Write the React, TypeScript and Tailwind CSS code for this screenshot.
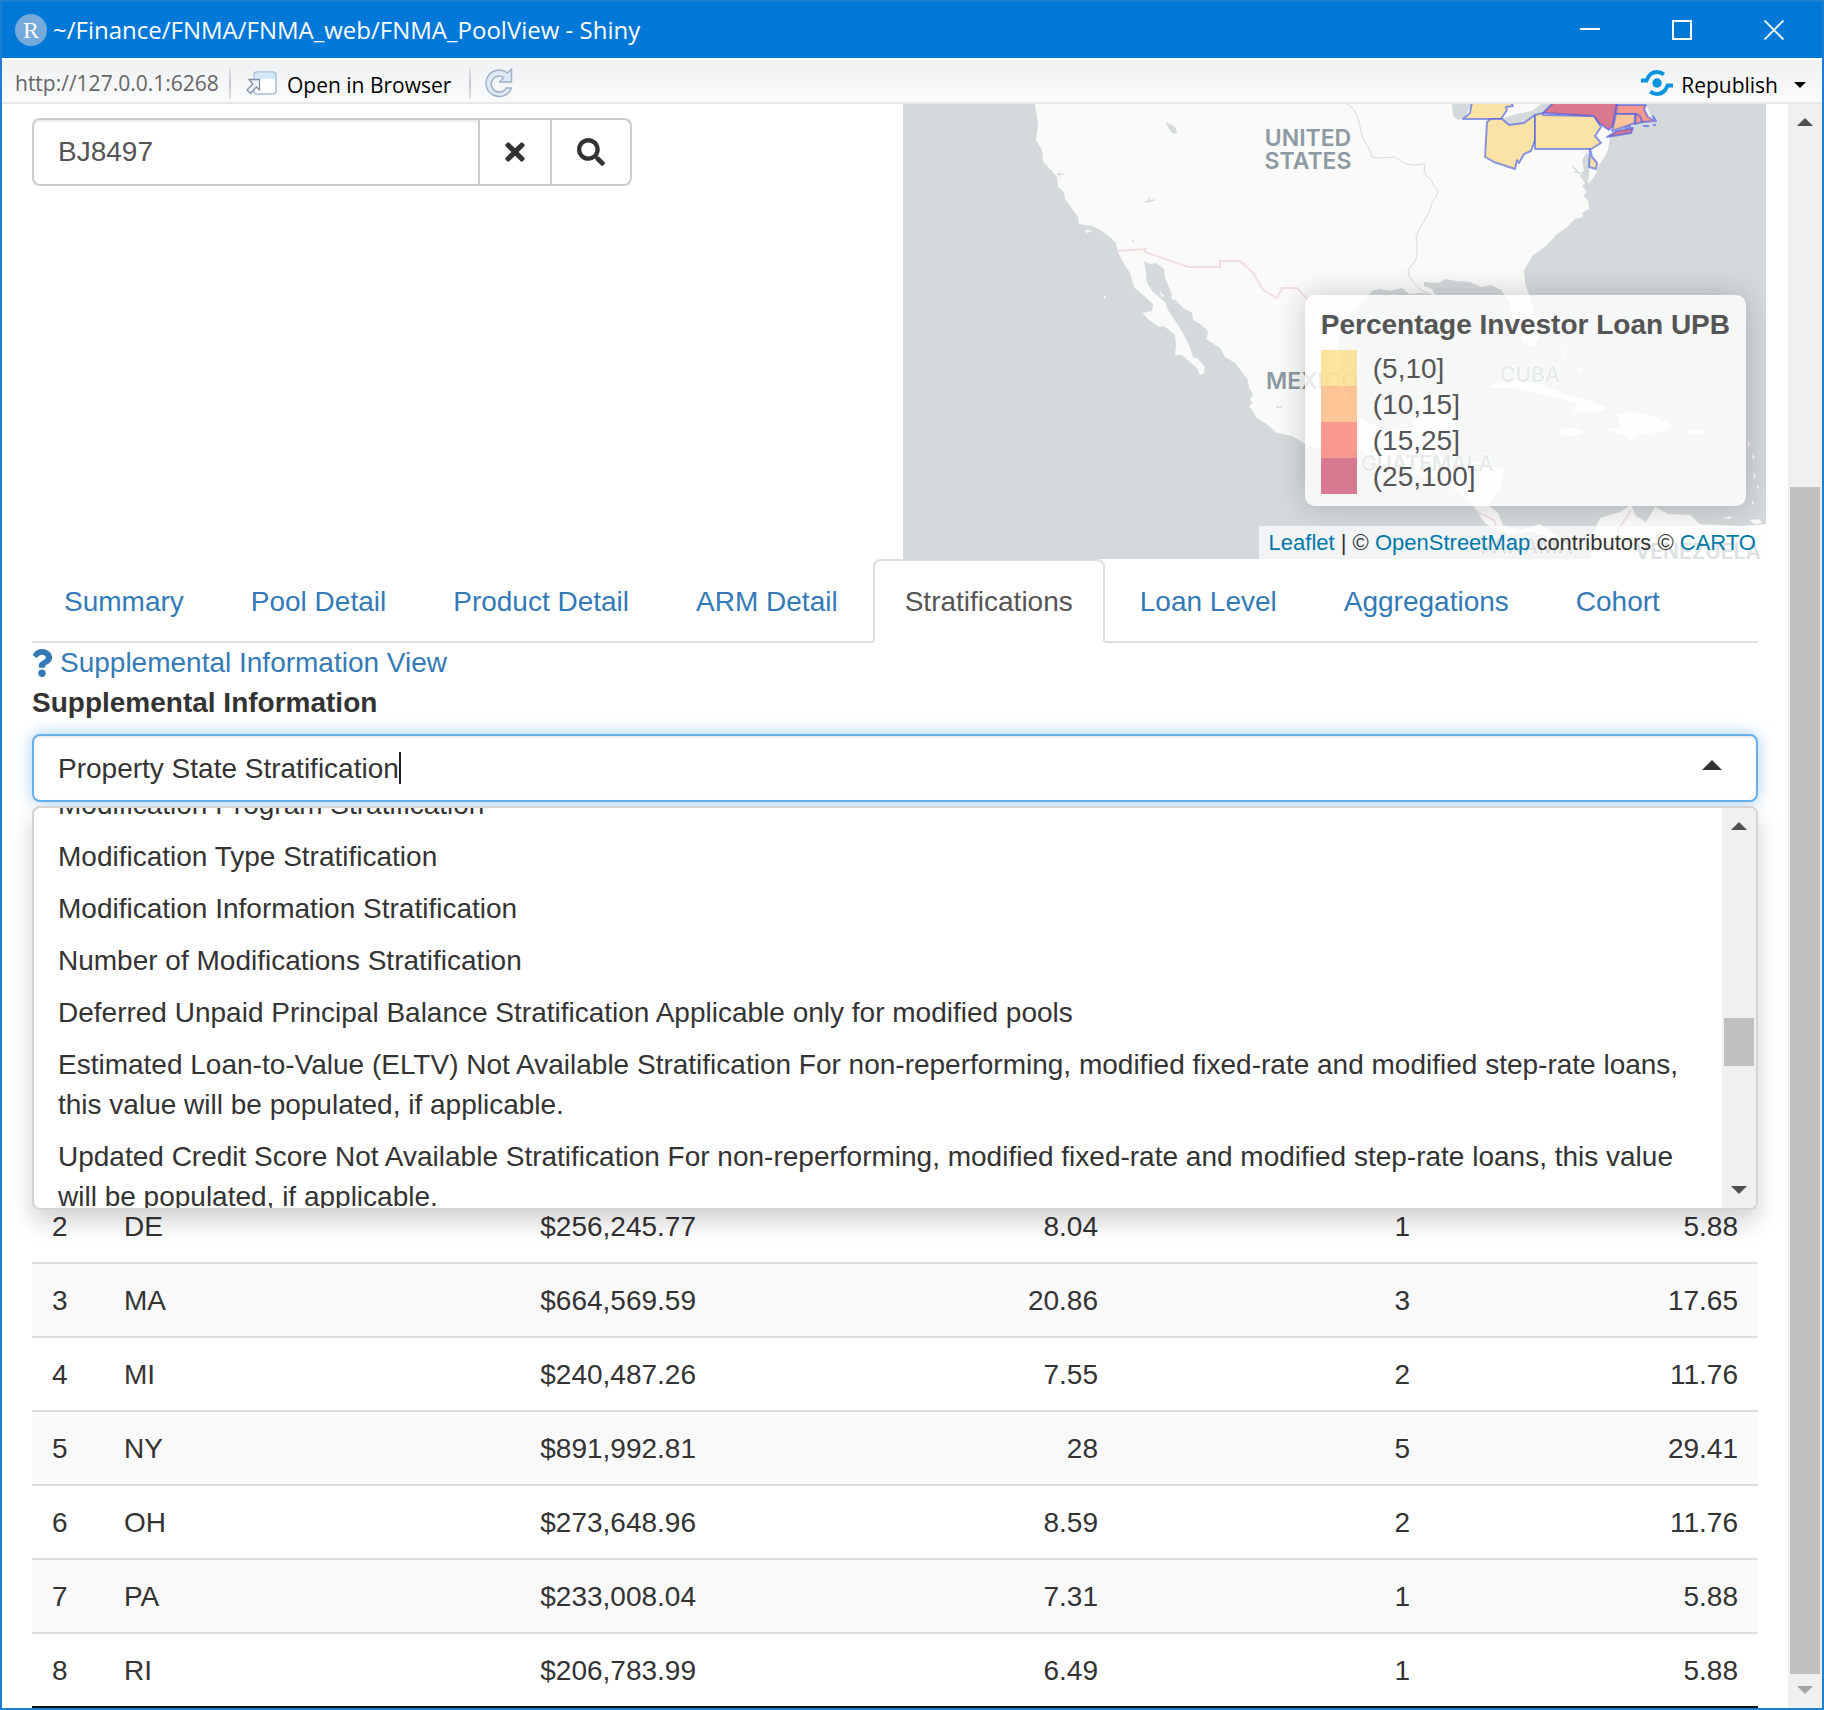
import { useState } from "react";
import { FaQuestion, FaSearch, FaTimes } from "react-icons/fa";

const TABS = [
  "Summary",
  "Pool Detail",
  "Product Detail",
  "ARM Detail",
  "Stratifications",
  "Loan Level",
  "Aggregations",
  "Cohort",
];

const OPTIONS = [
  "Modification Program Stratification",
  "Modification Type Stratification",
  "Modification Information Stratification",
  "Number of Modifications Stratification",
  "Deferred Unpaid Principal Balance Stratification Applicable only for modified pools",
  "Estimated Loan-to-Value (ELTV) Not Available Stratification For non-reperforming, modified fixed-rate and modified step-rate loans, this value will be populated, if applicable.",
  "Updated Credit Score Not Available Stratification For non-reperforming, modified fixed-rate and modified step-rate loans, this value will be populated, if applicable.",
];

const ROWS = [
  ["2", "DE", "$256,245.77", "8.04", "1", "5.88"],
  ["3", "MA", "$664,569.59", "20.86", "3", "17.65"],
  ["4", "MI", "$240,487.26", "7.55", "2", "11.76"],
  ["5", "NY", "$891,992.81", "28", "5", "29.41"],
  ["6", "OH", "$273,648.96", "8.59", "2", "11.76"],
  ["7", "PA", "$233,008.04", "7.31", "1", "5.88"],
  ["8", "RI", "$206,783.99", "6.49", "1", "5.88"],
];

const LEGEND = [
  { label: "(5,10]", swatch: "bg-[#fed976]/70" },
  { label: "(10,15]", swatch: "bg-[#fdae6b]/70" },
  { label: "(15,25]", swatch: "bg-[#f86f5e]/70" },
  { label: "(25,100]", swatch: "bg-[#c94465]/70" },
];

function ArrowUp({ className }: { className: string }) {
  return (
    <svg className={className} width="16" height="8" viewBox="0 0 16 8" aria-hidden="true">
      <path d="M0 8 8 0l8 8z" fill="currentColor" />
    </svg>
  );
}

function ArrowDown({ className }: { className: string }) {
  return (
    <svg className={className} width="16" height="8" viewBox="0 0 16 8" aria-hidden="true">
      <path d="M0 0 8 8l8-8z" fill="currentColor" />
    </svg>
  );
}

function TitleBar() {
  return (
    <header className="flex h-[56px] items-center bg-[#0078d7] pr-0.5 pl-[13px] text-white">
      <span className="flex size-8 items-center justify-center rounded-full bg-[#75aadb] font-['Liberation_Serif',serif] text-[24px] leading-8">
        R
      </span>
      <h1 className="ml-1.5 flex-1 text-[24px] leading-8">~/Finance/FNMA/FNMA_web/FNMA_PoolView - Shiny</h1>
      <div className="flex">
        <button type="button" aria-label="Minimize" className="flex h-14 w-[92px] items-center justify-center">
          <svg width="20" height="20" viewBox="0 0 20 20">
            <path d="M0 9h20" stroke="#fff" strokeWidth="2" />
          </svg>
        </button>
        <button type="button" aria-label="Maximize" className="flex h-14 w-[92px] items-center justify-center">
          <svg width="20" height="20" viewBox="0 0 20 20">
            <rect x="1" y="1" width="18" height="18" fill="none" stroke="#fff" strokeWidth="2" />
          </svg>
        </button>
        <button type="button" aria-label="Close" className="flex h-14 w-[92px] items-center justify-center">
          <svg width="20" height="20" viewBox="0 0 20 20">
            <path d="M0.500.500l19 19M19.500.500l-19 19" stroke="#fff" strokeWidth="1.800" />
          </svg>
        </button>
      </div>
    </header>
  );
}

function Separator() {
  return <span className="h-8 w-0.5 bg-gradient-to-b from-[#e8e9eb] via-[#c3c7cb] to-[#e2e4e6]" />;
}

function Toolbar() {
  return (
    <div className="flex h-[46px] items-center border-y-2 border-t-white border-b-[#e6e7e8] bg-gradient-to-b from-[#eff1f3] to-[#fafbfb] pt-1 pl-[13px] text-[21px] leading-8">
      <span className="w-[214px] text-[#666]">http://127.0.0.1:6268</span>
      <Separator />
      <button type="button" className="flex w-[238px] items-center gap-2.5 pl-3.5 text-black">
        <svg width="32" height="26" viewBox="0 0 32 26" aria-hidden="true">
          <rect x="9" y="2" width="22" height="22" rx="3" fill="#fff" stroke="#a9bfd6" strokeWidth="1.500" />
          <path d="M9.800 9V5a2.500 2.500 0 0 1 2.500-2.300h15.400A2.500 2.500 0 0 1 30.200 5v4z" fill="#d3e8fb" />
          <path
            d="M4 9.500h10.500V20l-3.200-3-5.600 6.500-3.700-3.500 5.800-6z"
            fill="#eef1f5"
            stroke="#8391a5"
            strokeWidth="1.300"
          />
        </svg>
        <span className="pt-1">Open in Browser</span>
      </button>
      <Separator />
      <button type="button" aria-label="Refresh" className="ml-3">
        <svg width="30" height="32" viewBox="0 0 30 32">
          <path
            d="M28.500 2v13H16.500l4.300-4.500a8 8 0 1 0 2.500 10.500h5.200A13.200 13.200 0 1 1 24.500 6z"
            fill="#dfe9f6"
            stroke="#9fb0c6"
            strokeWidth="1.500"
            strokeLinejoin="round"
          />
        </svg>
      </button>
      <button type="button" className="ml-auto flex items-center gap-2 text-black">
        <svg width="32" height="26" viewBox="0 0 32 26" aria-hidden="true">
          <circle cx="16" cy="13" r="4.700" fill="#0a94e0" />
          <path
            d="M0 10.500h5.500c1.800-5 5.500-8.500 10.500-8.500 2.500 0 5 .900 6.800 2.500M32 15.500h-5.500c-1.800 5-5.500 8.500-10.500 8.500-2.500 0-5-.900-6.800-2.500"
            fill="none"
            stroke="#0a94e0"
            strokeWidth="3.800"
          />
        </svg>
        <span className="pt-1">Republish</span>
      </button>
      <button type="button" aria-label="Publish options" className="px-4 pt-1">
        <svg width="12" height="6" viewBox="0 0 12 6">
          <path d="M0 0h12L6 6z" />
        </svg>
      </button>
    </div>
  );
}

const WATER = "#d4d9dc";
const LAND = "#fafaf8";

function MapDrawing() {
  return (
    <svg
      className="absolute inset-0 size-full"
      viewBox="903 104 863 455"
      preserveAspectRatio="xMinYMin slice"
      role="img"
      aria-label="Map of investor loans by state"
    >
      <rect x="903" y="104" width="863" height="455" fill={WATER} />
      <g fill={LAND}>
        <path d="M1035 104 1038 125 1036 140 1042 150 1043 162 1052 171 1057 177 1058 187 1064 192 1065 199 1073 210 1078 217 1079 224 1092 226 1102 231 1110 237 1116 243 1118 252 1123 262 1130 273 1134 287 1143 295 1153 304 1152 311 1142 313 1149 320 1159 327 1164 326 1175 335 1176 345 1175 355 1182 355 1190 362 1197 368 1200 375 1204 373 1205 367 1198 359 1193 357 1190 347 1183 333 1178 325 1168 310 1165 302 1153 292 1147 283 1146 272 1144 261 1150 264 1156 263 1164 269 1165 278 1173 297 1182 307 1192 313 1193 320 1200 324 1207 330 1208 333 1206 339 1220 348 1225 357 1235 363 1248 380 1249 388 1253 394 1250 400 1253 403 1249 406 1257 418 1268 425 1277 433 1292 436 1307 445 1330 452 1362 450 1385 465 1410 472 1443 482 1462 495 1474 507 1484 522 1494 530 1510 534 1530 532 1545 536 1556 545 1562 540 1540 524 1520 530 1503 525 1498 513 1488 505 1500 490 1504 470 1480 462 1447 463 1437 450 1453 427 1458 408 1464 393 1443 393 1420 398 1413 428 1385 430 1358 417 1341 377 1338 340 1351 313 1368 296 1372 291 1379 289 1390 291 1402 288 1409 294 1421 293 1436 296 1432 289 1424 286 1424 282 1438 283 1446 279 1456 281 1470 282 1481 287 1491 285 1501 290 1510 303 1515 327 1525 345 1533 347 1539 337 1537 320 1530 297 1525 283 1524 270 1533 255 1545 247 1556 235 1567 227 1575 219 1583 217 1582 213 1589 209 1588 200 1583 196 1587 192 1582 186 1585 183 1580 176 1584 170 1582 160 1587 152 1590 160 1589 174 1588 184 1595 176 1599 165 1604 158 1608 150 1610 137 1613 132 1625 129 1640 122 1656 122 1651 117 1646 104Z" />
        <path d="M1591 559 1594 530 1600 518 1620 512 1631 505 1636 516 1646 522 1655 507 1668 514 1690 515 1700 524 1740 526 1766 524V559Z" />
        <path d="M1488 387 1508 379 1542 385 1562 393 1583 398 1607 408 1596 413 1573 411 1578 403 1558 398 1515 388 1500 388Z" />
        <path d="M1604 430 1622 427 1616 414 1632 412 1655 417 1672 425 1668 430 1640 435 1630 441 1622 434Z" />
        <ellipse cx="1571" cy="432" rx="12" ry="4" />
        <ellipse cx="1695" cy="432" rx="9" ry="3" />
        <path d="M1562 345l3 8 2 9-3-2zM1575 365l5 3 3 6-5-3zM1084 230l9 1-6 2zM1160 291l4 5-3 1zM1173 294l2 7-4-3zM1104 295l2 2-2 2z" />
        <path d="M1748 440l2 4-2 3zM1752 454l3 3-2 3zM1754 472l2 5-3 2zM1757 484l2 3-2 3zM1752 500l2 3-2 2zM1722 518l10-2-2 3zM1750 520l9-1 3 4-8 1z" />
      </g>
      <g fill={WATER}>
        <path d="M1452 104 1453 116 1458 120 1464 118 1472 104ZM1501 119 1509 125 1524 124 1536 115 1545 112 1552 104 1541 104 1532 111 1516 114Z" />
        <path d="M1165 122l7 3 4 3 1 6-5-1-4-6zM1130 238l5 4 1 1-3-1zM1089 143l2 4-1-2zM1057 173l9 1-7 1 2 6z" />
      </g>
      <g fill="none" stroke={WATER} strokeWidth="1.500">
        <path d="M1145 202l10-2M1149 197v5M1276 407h6M1572 166l8 8M1574 172l7 1" />
        <path
          d="M1347 104c10 5 12 18 14 27 1 9 8 14 11 26 8 2 18 0 23 0 8 6 12 8 21 8l9-1-1 9 8 8c1 6 5 6 6 11-2 8-6 7-7 15-3 10-12 20-15 30 1 8 2 12 0 22-2 6-8 8-8 13 2 9 10 14 14 19l10 4"
          strokeWidth="1"
        />
      </g>
      <path
        d="M1118 251 1146 249 1145 252 1188 267H1220V261H1240L1254 274 1263 290 1277 298 1282 288H1297L1307 299 1314 318"
        fill="none"
        stroke="#f1dfe0"
        strokeWidth="2"
      />
      <path d="M1474 510 1494 520 1496 526M1631 510 1618 530 1622 538" fill="none" stroke="#eedcdc" strokeWidth="1.500" />
      <g stroke="#3f58e8" strokeOpacity="0.600" strokeWidth="2" strokeLinejoin="round">
        <g fill="#fbe3a7">
          <path d="M1472 102 1470 113 1463 119H1501L1507 110 1506 107 1513 106 1511 102Z" />
          <path d="M1487 122 1491 119H1502L1509 125 1524 123 1535 115V140L1531 151 1524 154 1519 163 1517 160 1515 169 1494 162 1485 157Z" />
          <path d="M1535 115 1543 113 1543 115 1594 116 1601 127 1595 136 1601 143 1591 149H1535Z" />
          <path d="M1590 149 1592 157 1597 163 1596 169 1589 167Z" />
        </g>
        <g fill="#d9788e">
          <path d="M1554 102 1543 113 1594 116 1599 123 1609 130 1613 125 1617 102Z" />
          <path d="M1607 137 1617 131 1633 128 1631 133Z" />
        </g>
        <path d="M1617 105H1646L1644 109 1648 117 1655 121 1653 116 1656 121 1642 122 1636 114H1616Z" fill="#f79a8d" />
        <path d="M1616 114H1635V123L1624 127 1612 131Z" fill="#fbc59c" />
        <path d="M1636 114 1640 116 1642 122 1635 124Z" fill="#f79a8d" />
        <path d="M1643 126h6M1653 125h3M1625 128l6-2" fill="none" />
      </g>
      <g
        fontFamily="Inter, sans-serif"
        fontWeight="600"
        fontSize="23"
        fill="#8e9aa3"
        stroke={LAND}
        strokeWidth="2"
        paintOrder="stroke"
      >
        <text x="1308" y="146" textAnchor="middle">UNITED</text>
        <text x="1308" y="169" textAnchor="middle">STATES</text>
        <text x="1266" y="389">MEXICO</text>
        <text x="1500" y="382" fontSize="21">CUBA</text>
        <text x="1361" y="471" fontSize="21">GUATEMALA</text>
        <text x="1480" y="554" fontSize="21">PANAMA</text>
        <text x="1635" y="559" fontSize="21">VENEZUELA</text>
      </g>
    </svg>
  );
}

function MapPanel() {
  return (
    <section className="relative h-[455px] overflow-hidden">
      <MapDrawing />
      <div className="absolute right-5 bottom-[53px] rounded-[10px] bg-[#fefffe]/80 px-4 pt-2.5 pb-3 text-[#555] shadow-[0_0_30px_rgba(0,0,0,0.2)]">
        <h2 className="mb-[5px] font-bold">Percentage Investor Loan UPB</h2>
        <ul>
          {LEGEND.map((entry) => (
            <li key={entry.label} className="flex h-9 items-center gap-4">
              <span className={`h-9 w-9 ${entry.swatch}`} />
              <span className="pt-0.5">{entry.label}</span>
            </li>
          ))}
        </ul>
      </div>
      <p className="absolute right-0 bottom-0 bg-white/70 px-2.5 text-[22px] leading-[33px] whitespace-nowrap text-[#333]">
        <a href="#leaflet" className="text-[#0078a8]">Leaflet</a> | ©{" "}
        <a href="#osm" className="text-[#0078a8]">OpenStreetMap</a> contributors ©{" "}
        <a href="#carto" className="text-[#0078a8]">CARTO</a>
      </p>
    </section>
  );
}

function PoolSearch() {
  const [pool, setPool] = useState("BJ8497");
  return (
    <form className="mt-3.5 flex h-[68px] w-[600px]" onSubmit={(event) => event.preventDefault()}>
      <input
        aria-label="Pool number"
        value={pool}
        onChange={(event) => setPool(event.target.value)}
        className="min-w-0 flex-1 rounded-l-lg border-2 border-[#ccc] px-6 text-[#555] shadow-[inset_0_2px_2px_rgba(0,0,0,0.075)] outline-none"
      />
      <button
        type="button"
        aria-label="Clear"
        className="-ml-0.5 flex w-[74px] items-center justify-center border-2 border-[#ccc] bg-white text-[#333]"
      >
        <FaTimes size={28} />
      </button>
      <button
        type="submit"
        aria-label="Search"
        className="-ml-0.5 flex w-[82px] items-center justify-center rounded-r-lg border-2 border-[#ccc] bg-white text-[#333]"
      >
        <FaSearch size={28} />
      </button>
    </form>
  );
}

function Tabs() {
  return (
    <nav className="flex gap-[3px] border-b-2 border-[#ddd]">
      {TABS.map((tab) =>
        tab === "Stratifications" ? (
          <a
            key={tab}
            href="#stratifications"
            aria-current="page"
            className="-mb-0.5 rounded-t-lg border-2 border-[#ddd] border-b-white bg-white px-[30px] pt-[21px] pb-[19px] text-[#555]"
          >
            {tab}
          </a>
        ) : (
          <a
            key={tab}
            href="#tab"
            className="-mb-0.5 border-2 border-transparent px-[30px] pt-[21px] pb-[19px] text-[#337ab7]"
          >
            {tab}
          </a>
        ),
      )}
    </nav>
  );
}

function OptionMenu() {
  return (
    <div className="absolute inset-x-0 top-full z-10 mt-1 flex h-[404px] overflow-hidden rounded-lg border-2 border-[#d4d4d4] bg-white shadow-[0_12px_24px_rgba(0,0,0,0.175)]">
      <ul className="-mt-[29px] flex-1" role="listbox" aria-label="Supplemental Information options">
        {OPTIONS.map((option) => (
          <li key={option} role="option" aria-selected="false" className="px-6 py-1.5">
            {option}
          </li>
        ))}
      </ul>
      <div className="flex w-[34px] flex-col items-center bg-[#f0f0f0] py-3.5 text-[#505050]">
        <ArrowUp className="" />
        <span className="mt-[188px] h-12 w-[30px] bg-[#c1c1c1]" />
        <ArrowDown className="mt-auto" />
      </div>
    </div>
  );
}

function SupplementalSelect() {
  const [value, setValue] = useState("Property State Stratification");
  return (
    <div>
      <label htmlFor="supplemental" className="mb-[11px] block font-bold">
        Supplemental Information
      </label>
      <div className="relative">
        <div className="flex h-[68px] items-center rounded-lg border-2 border-[#66afe9] bg-white px-6 shadow-[inset_0_2px_2px_rgba(0,0,0,0.075),0_0_16px_rgba(102,175,233,0.6)]">
          <input
            id="supplemental"
            value={value}
            onChange={(event) => setValue(event.target.value)}
            className="[field-sizing:content] pt-0.5 outline-none"
          />
          <span className="h-8 w-0.5 bg-[#222]" />
          <svg className="mr-2.5 mb-1.5 ml-auto" width="20" height="10" viewBox="0 0 20 10" aria-hidden="true">
            <path d="M0 10 10 0l10 10z" fill="#333" />
          </svg>
        </div>
        <OptionMenu />
      </div>
    </div>
  );
}

function StateTable() {
  return (
    <table className="mt-[386px] w-full table-fixed border-separate border-spacing-0 border-b-2 border-[#111]">
      <colgroup>
        <col className="w-[72px]" />
        <col className="w-[300px]" />
        <col className="w-[312px]" />
        <col className="w-[402px]" />
        <col className="w-[312px]" />
        <col className="w-[328px]" />
      </colgroup>
      <tbody>
        {ROWS.map((row) => (
          <tr key={row[1]} className="even:bg-[#f9f9f9]">
            {row.map((cell, index) => (
              <td
                key={index}
                className={
                  index < 2
                    ? "border-t-2 border-[#ddd] px-5 pt-[17px] pb-[15px] text-left"
                    : "border-t-2 border-[#ddd] px-5 pt-[17px] pb-[15px] text-right"
                }
              >
                {cell}
              </td>
            ))}
          </tr>
        ))}
      </tbody>
    </table>
  );
}

export default function App() {
  return (
    <div className="flex min-h-screen flex-col border-2 border-[#1c7fd2] bg-white font-['Open_Sans',sans-serif]">
      <TitleBar />
      <Toolbar />
      <div className="flex flex-1">
        <main className="min-w-0 flex-1 font-['Liberation_Sans',Arial,sans-serif] text-[28px] leading-10 text-[#333]">
          <div className="grid grid-cols-2">
            <div className="pl-[30px]">
              <PoolSearch />
            </div>
            <div className="pr-[22px] pl-2">
              <MapPanel />
            </div>
          </div>
          <div className="px-[30px]">
            <Tabs />
            <a href="#help" className="flex items-center gap-2 text-[#337ab7]">
              <FaQuestion size={28} className="-mx-1" />
              Supplemental Information View
            </a>
            <SupplementalSelect />
            <StateTable />
          </div>
        </main>
        <div className="flex w-[34px] flex-col items-center bg-[#f0f0f0] py-3.5">
          <ArrowUp className="shrink-0 text-[#505050]" />
          <div className="mt-[361px] mb-3 w-[30px] flex-1 bg-[#c1c1c1]" />
          <ArrowDown className="shrink-0 text-[#a3a3a3]" />
        </div>
      </div>
    </div>
  );
}
